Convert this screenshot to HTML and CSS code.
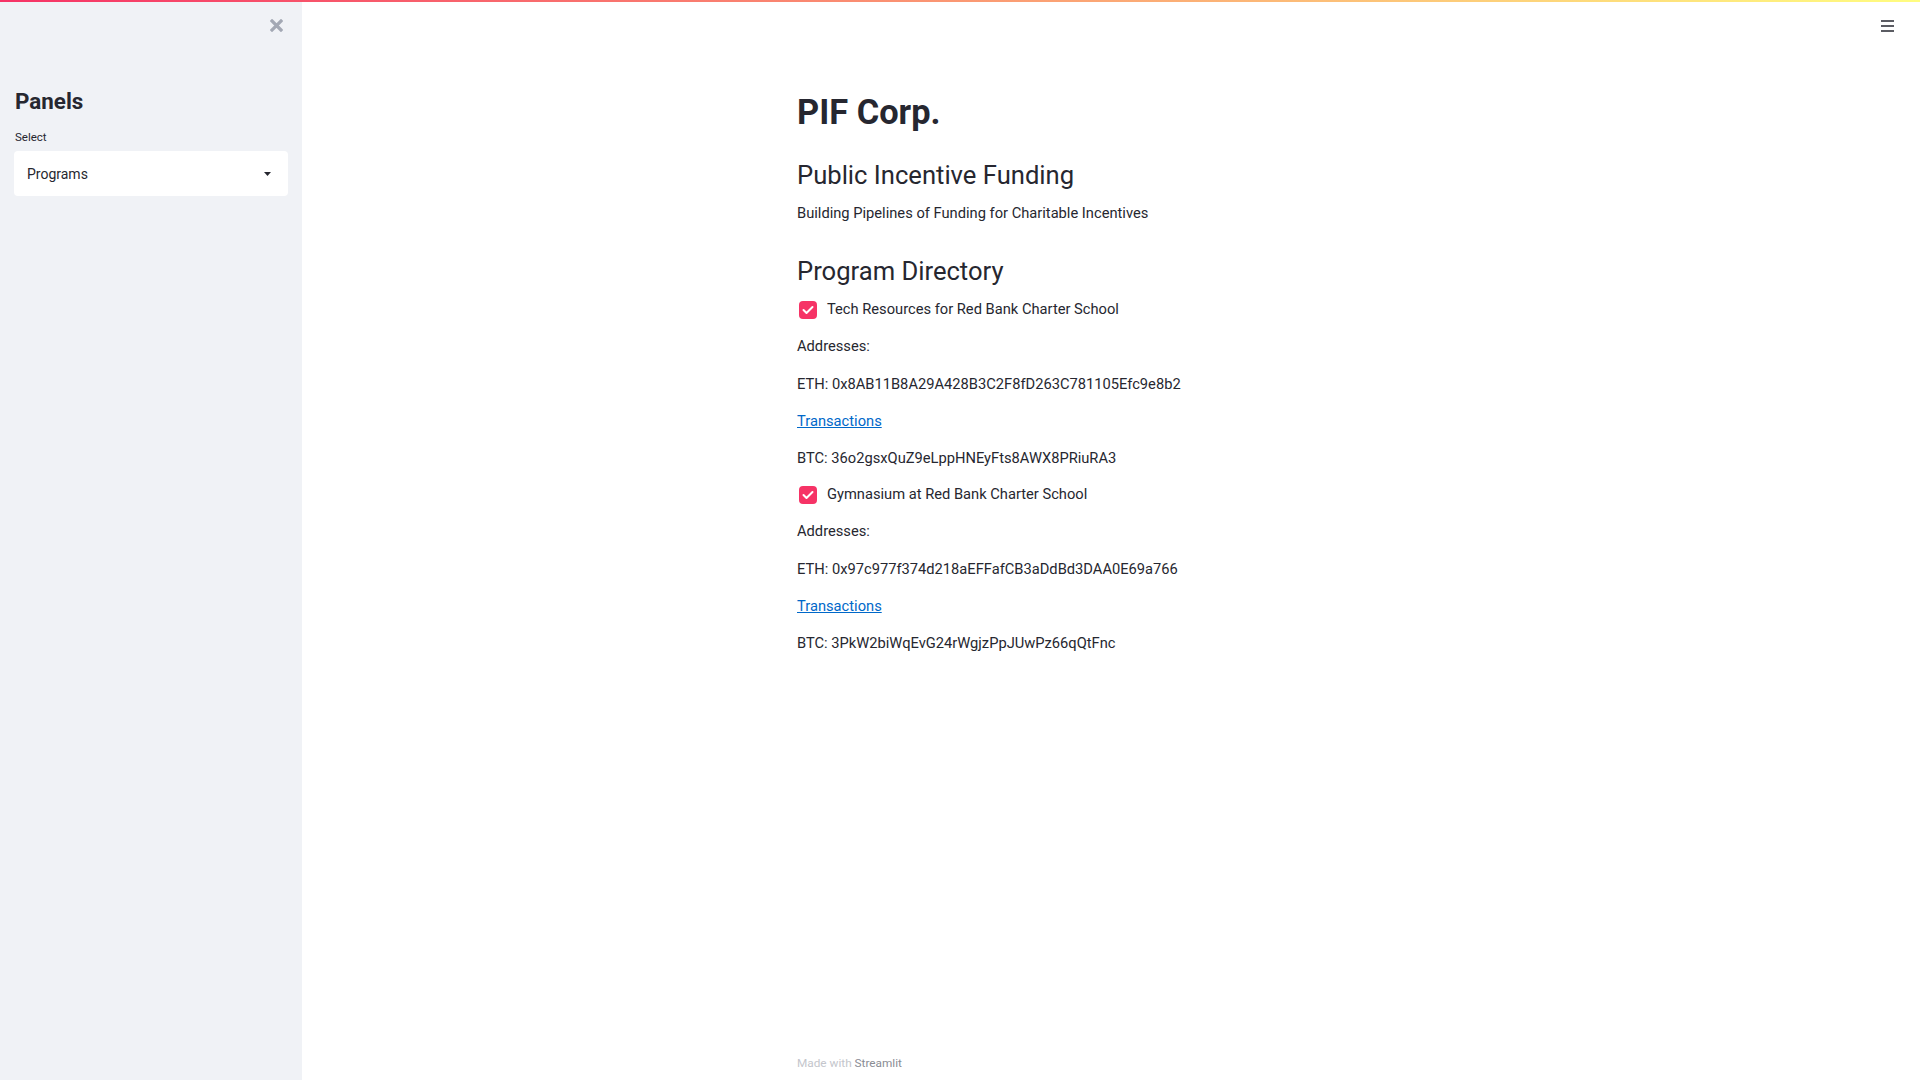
FILE: index.html
```html
<!DOCTYPE html>
<html lang="en">
<head>
<meta charset="utf-8">
<title>PIF Corp.</title>
<link rel="stylesheet" href="styles.css">
</head>
<body>
<div class="topbar"></div>
<div class="app">
  <aside class="sidebar">
    <div class="close-row">
      <svg class="close-icon" width="13" height="13" viewBox="0 0 13 13"><path d="M2 2 L11 11 M11 2 L2 11" stroke="#a3a8b4" stroke-width="3.2" stroke-linecap="square"/></svg>
    </div>
    <h2 class="side-title">Panels</h2>
    <div class="field-label">Select</div>
    <div class="selectbox">
      <span class="select-value">Programs</span>
      <svg class="caret" width="7" height="4" viewBox="0 0 7 4"><path d="M0 0 H7 L3.5 4 Z" fill="#262730"/></svg>
    </div>
  </aside>
  <main class="main">
    <svg class="menu" width="13" height="12" viewBox="0 0 13 12"><path d="M0 1 H13 M0 6 H13 M0 11 H13" stroke="#262730" stroke-width="1.6"/></svg>
    <div class="content">
      <h1 class="title">PIF Corp.</h1>
      <h2 class="subtitle">Public Incentive Funding</h2>
      <p class="text tagline">Building Pipelines of Funding for Charitable Incentives</p>
      <h2 class="subtitle section">Program Directory</h2>

      <label class="check">
        <span class="box"><svg width="12" height="10" viewBox="0 0 12 10"><path d="M1.5 5 L4.5 8 L10.5 2" fill="none" stroke="#fff" stroke-width="2" stroke-linecap="round" stroke-linejoin="round"/></svg></span>
        <span>Tech Resources for Red Bank Charter School</span>
      </label>
      <p class="text">Addresses:</p>
      <p class="text">ETH: 0x8AB11B8A29A428B3C2F8fD263C781105Efc9e8b2</p>
      <p class="text"><a class="link" href="#">Transactions</a></p>
      <p class="text">BTC: 36o2gsxQuZ9eLppHNEyFts8AWX8PRiuRA3</p>

      <label class="check">
        <span class="box"><svg width="12" height="10" viewBox="0 0 12 10"><path d="M1.5 5 L4.5 8 L10.5 2" fill="none" stroke="#fff" stroke-width="2" stroke-linecap="round" stroke-linejoin="round"/></svg></span>
        <span>Gymnasium at Red Bank Charter School</span>
      </label>
      <p class="text">Addresses:</p>
      <p class="text">ETH: 0x97c977f374d218aEFFafCB3aDdBd3DAA0E69a766</p>
      <p class="text"><a class="link" href="#">Transactions</a></p>
      <p class="text">BTC: 3PkW2biWqEvG24rWgjzPpJUwPz66qQtFnc</p>
    </div>
    <footer class="footer">Made with <span class="brand">Streamlit</span></footer>
  </main>
</div>
</body>
</html>
```

FILE: styles.css
```css
html, body {
  margin: 0;
  padding: 0;
  height: 100%;
}
body {
  font-family: Roboto, "Liberation Sans", sans-serif;
  color: #262730;
  background: #fff;
  overflow: hidden;
}
.topbar {
  height: 2px;
  background: linear-gradient(90deg, rgb(246, 51, 102), rgb(255, 253, 128));
}
.app {
  display: flex;
  height: 1078px;
}
.sidebar {
  width: 302px;
  flex: none;
  background: #f0f2f6;
  box-sizing: border-box;
  padding: 0 14px;
  display: flex;
  flex-direction: column;
}
.close-row {
  display: flex;
  justify-content: flex-end;
  padding-top: 17px;
  padding-right: 5px;
  height: 13px;
}
.close-icon {
  display: block;
}
.side-title {
  margin: 54px 0 0 1px;
  font-size: 22.4px;
  line-height: 30px;
  font-weight: 700;
}
.field-label {
  margin: 13px 0 0 1px;
  font-size: 11.5px;
  line-height: 16px;
}
.selectbox {
  margin-top: 6px;
  height: 45px;
  background: #fff;
  border-radius: 4px;
  display: flex;
  align-items: center;
  justify-content: space-between;
  padding: 0 17px 0 13px;
}
.select-value {
  font-size: 14px;
}
.caret {
  display: block;
}
.main {
  flex: 1;
  position: relative;
  display: flex;
  flex-direction: column;
  align-items: center;
}
.menu {
  position: absolute;
  top: 18px;
  right: 26px;
}
.content {
  width: 628px;
  padding-top: 89px;
}
.title {
  margin: 0;
  font-size: 34.4px;
  line-height: 42px;
  font-weight: 700;
}
.subtitle {
  margin: 26px 0 0;
  font-size: 25.6px;
  line-height: 32px;
  font-weight: 400;
}
.subtitle.section {
  margin-top: 31px;
}
.text {
  margin: 16.3px 0 0;
  font-size: 14.7px;
  line-height: 21px;
}
.tagline {
  margin-top: 12px;
}
.check {
  display: flex;
  align-items: center;
  gap: 10px;
  margin-top: 15px;
  font-size: 14.7px;
  line-height: 21px;
}
.subtitle + .check {
  margin-top: 12px;
}
.box {
  width: 18px;
  height: 18px;
  border-radius: 4px;
  background: #f63366;
  display: flex;
  align-items: center;
  justify-content: center;
  margin-left: 2px;
}
.link {
  color: #0068c9;
  text-decoration: underline;
}
.footer {
  margin-top: auto;
  width: 628px;
  font-size: 11.8px;
  line-height: 16px;
  padding-bottom: 9px;
  color: #c4c6cc;
}
.brand {
  color: #8a8c94;
}
```
